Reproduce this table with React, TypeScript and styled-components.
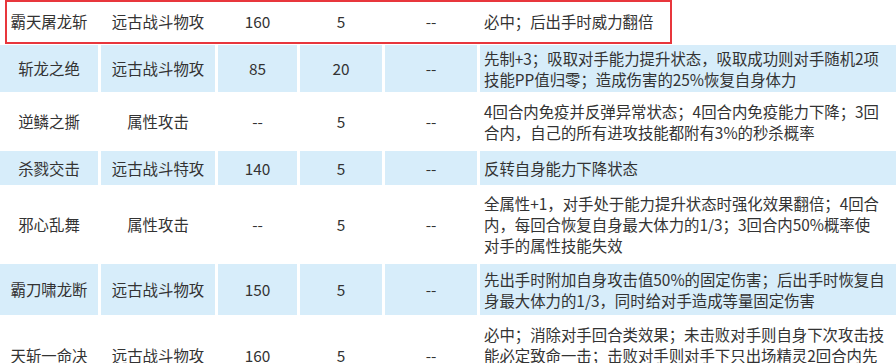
import styled, { createGlobalStyle } from "styled-components";

const GlobalStyle = createGlobalStyle`
  html, body {
    margin: 0;
    padding: 0;
    background: #ffffff;
  }
  body {
    font-family: "Noto Sans CJK SC", "Noto Sans", sans-serif;
    color: #333333;
    overflow: hidden;
  }
`;

const Components = {
  Wrapper: styled.div`
    position: relative;
    width: 896px;
    height: 363px;
    overflow: hidden;
    background: #ffffff;
  `,
  Table: styled.div`
    display: grid;
    grid-template-columns: 98px 114px 79px 82px 92px 420px;
    column-gap: 3px;
    row-gap: 3px;
  `,
  Cell: styled.div<{ $blue?: boolean; $h: number }>`
    height: ${(p) => p.$h}px;
    background: ${(p) => (p.$blue ? "#d7edfa" : "#ffffff")};
    display: flex;
    align-items: center;
    justify-content: center;
    font-size: 15.4px;
    line-height: 21px;
    white-space: nowrap;
    color: #333333;
  `,
  Desc: styled.div<{ $blue?: boolean; $h: number }>`
    height: ${(p) => p.$h}px;
    background: ${(p) => (p.$blue ? "#d7edfa" : "#ffffff")};
    display: flex;
    flex-direction: column;
    justify-content: center;
    padding-left: 4px;
    font-size: 15.4px;
    line-height: 21px;
    white-space: nowrap;
    overflow: hidden;
    color: #333333;
  `,
  Line: styled.span`
    display: block;
  `,
  Highlight: styled.div`
    position: absolute;
    left: 5px;
    top: 0px;
    width: 663px;
    height: 40px;
    border: 2px solid #e8363c;
    pointer-events: none;
  `,
};

type Skill = {
  name: string;
  type: string;
  power: string;
  pp: string;
  hit: string;
  desc: string[];
  h: number;
  blue?: boolean;
};

const skills: Skill[] = [
  { name: "霸天屠龙斩", type: "远古战斗物攻", power: "160", pp: "5", hit: "--", desc: ["必中；后出手时威力翻倍"], h: 42 },
  {
    name: "斩龙之绝", type: "远古战斗物攻", power: "85", pp: "20", hit: "--", h: 47, blue: true,
    desc: ["先制+3；吸取对手能力提升状态，吸取成功则对手随机2项", "技能PP值归零；造成伤害的25%恢复自身体力"],
  },
  {
    name: "逆鳞之撕", type: "属性攻击", power: "--", pp: "5", hit: "--", h: 53,
    desc: ["4回合内免疫并反弹异常状态；4回合内免疫能力下降；3回", "合内，自己的所有进攻技能都附有3%的秒杀概率"],
  },
  { name: "杀戮交击", type: "远古战斗特攻", power: "140", pp: "5", hit: "--", h: 34, blue: true, desc: ["反转自身能力下降状态"] },
  {
    name: "邪心乱舞", type: "属性攻击", power: "--", pp: "5", hit: "--", h: 73,
    desc: [
      "全属性+1，对手处于能力提升状态时强化效果翻倍；4回合",
      "内，每回合恢复自身最大体力的1/3；3回合内50%概率使",
      "对手的属性技能失效",
    ],
  },
  {
    name: "霸刀啸龙断", type: "远古战斗物攻", power: "150", pp: "5", hit: "--", h: 51, blue: true,
    desc: ["先出手时附加自身攻击值50%的固定伤害；后出手时恢复自", "身最大体力的1/3，同时给对手造成等量固定伤害"],
  },
  {
    name: "天斩一命决", type: "远古战斗物攻", power: "160", pp: "5", hit: "--", h: 74,
    desc: [
      "必中；消除对手回合类效果；未击败对手则自身下次攻击技",
      "能必定致命一击；击败对手则对手下只出场精灵2回合内先",
      "制-1",
    ],
  },
];

export default function App() {
  return (
    <Components.Wrapper>
      <GlobalStyle />
      <Components.Table>
        {skills.map((s, index) => [
          <Components.Cell key={`n${index}`} $blue={s.blue} $h={s.h}>{s.name}</Components.Cell>,
          <Components.Cell key={`t${index}`} $blue={s.blue} $h={s.h}>{s.type}</Components.Cell>,
          <Components.Cell key={`p${index}`} $blue={s.blue} $h={s.h}>{s.power}</Components.Cell>,
          <Components.Cell key={`pp${index}`} $blue={s.blue} $h={s.h}>{s.pp}</Components.Cell>,
          <Components.Cell key={`h${index}`} $blue={s.blue} $h={s.h}>{s.hit}</Components.Cell>,
          <Components.Desc key={`d${index}`} $blue={s.blue} $h={s.h}>
            {s.desc.map((line, i) => (
              <Components.Line key={i}>{line}</Components.Line>
            ))}
          </Components.Desc>,
        ])}
      </Components.Table>
      <Components.Highlight />
    </Components.Wrapper>
  );
}
